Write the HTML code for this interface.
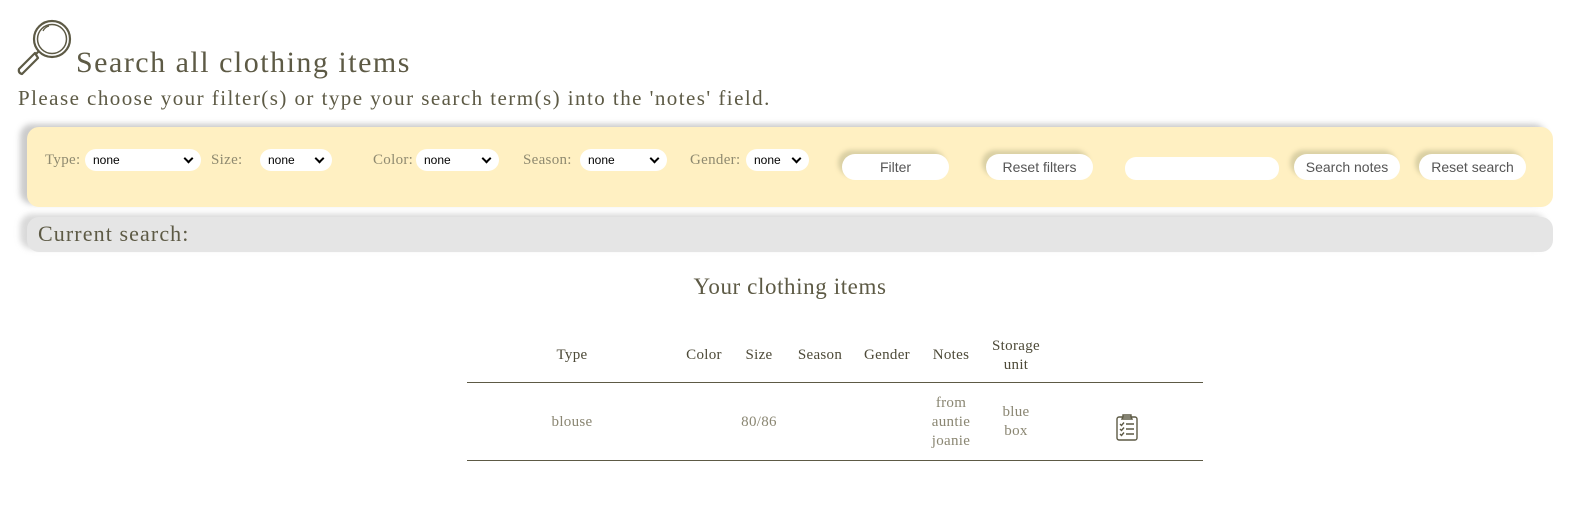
<!DOCTYPE html>
<html><head><style>
body{margin:0;width:1570px;height:511px;background:#fff;font-family:"Liberation Serif",serif;color:#5d5a45;position:relative;overflow:hidden}
.a{position:absolute;white-space:nowrap}
.lbl{font-size:15px;color:#8f8a70;top:152px;letter-spacing:.3px}
.sel{position:absolute;top:149px;height:22px;background:#fff;border-radius:11px;font-family:"Liberation Sans",sans-serif;font-size:12px;color:#000;line-height:22px;box-sizing:border-box;padding-left:8px}
.sel:after{content:"";position:absolute;right:9px;top:6px;width:5px;height:5px;border-right:2px solid #000;border-bottom:2px solid #000;transform:rotate(45deg)}
.btn{position:absolute;top:154px;height:26px;background:#fff;border-radius:13px;font-family:"Liberation Sans",sans-serif;font-size:14px;color:#555;text-align:center;line-height:26px;box-shadow:-4px -4px 4px rgba(150,150,110,.35)}
.th{font-size:15px;color:#4d4a38;text-align:center;line-height:19px;letter-spacing:.3px}
.td{font-size:15px;color:#8a8672;text-align:center;line-height:19px;letter-spacing:.3px}
</style></head><body>
<svg class="a" style="left:16px;top:18px" width="58" height="58" viewBox="0 0 58 58" fill="none" stroke="#5d5a45" stroke-width="2.2">
<circle cx="36" cy="21" r="18"/><circle cx="36" cy="21" r="14.5" stroke-width="1.5"/>
<path d="M23 33 L19 37"/><path d="M19 35 L3 51 Q2 55 6 56 L22 40 Z" stroke-linejoin="round"/>
<path d="M27 13 Q29 9 33 8" stroke-width="1.2"/>
</svg>
<div class="a" style="left:76px;top:46px;font-size:30px;letter-spacing:1.5px">Search all clothing items</div>
<div class="a" style="left:18px;top:86px;font-size:21px;letter-spacing:1.45px">Please choose your filter(s) or type your search term(s) into the 'notes' field.</div>
<div class="a" style="left:27px;top:127px;width:1526px;height:80px;background:#fff0c2;border-radius:12px;box-shadow:-7px -3px 6px rgba(140,140,140,.45)"></div>
<div class="a" style="left:27px;top:217px;width:1526px;height:35px;background:#e5e5e5;border-radius:12px;box-shadow:-7px -3px 6px rgba(160,160,160,.4)"></div>
<div class="a" style="left:38px;top:221px;font-size:22px;letter-spacing:1.1px">Current search:</div>
<div class="a lbl" style="left:45px">Type:</div><div class="sel" style="left:85px;width:116px">none</div>
<div class="a lbl" style="left:211px">Size:</div><div class="sel" style="left:260px;width:72px">none</div>
<div class="a lbl" style="left:373px">Color:</div><div class="sel" style="left:416px;width:83px">none</div>
<div class="a lbl" style="left:523px">Season:</div><div class="sel" style="left:580px;width:87px">none</div>
<div class="a lbl" style="left:690px">Gender:</div><div class="sel" style="left:746px;width:63px">none</div>
<div class="btn" style="left:842px;width:107px">Filter</div>
<div class="btn" style="left:986px;width:107px">Reset filters</div>
<div class="a" style="left:1125px;top:157px;width:154px;height:23px;background:#fff;border-radius:11px"></div>
<div class="btn" style="left:1294px;width:106px">Search notes</div>
<div class="btn" style="left:1419px;width:107px">Reset search</div>
<div class="a" style="left:590px;width:400px;top:274px;font-size:23px;text-align:center;letter-spacing:.6px">Your clothing items</div>
<div class="a th" style="left:522px;width:100px;top:346px">Type</div>
<div class="a th" style="left:674px;width:60px;top:346px">Color</div>
<div class="a th" style="left:729px;width:60px;top:346px">Size</div>
<div class="a th" style="left:785px;width:70px;top:346px">Season</div>
<div class="a th" style="left:852px;width:70px;top:346px">Gender</div>
<div class="a th" style="left:921px;width:60px;top:346px">Notes</div>
<div class="a th" style="left:981px;width:70px;top:337px">Storage<br>unit</div>
<div class="a" style="left:467px;top:382px;width:736px;height:1px;background:#5d5a45"></div>
<div class="a td" style="left:522px;width:100px;top:413px">blouse</div>
<div class="a td" style="left:729px;width:60px;top:413px">80/86</div>
<div class="a td" style="left:921px;width:60px;top:394px">from<br>auntie<br>joanie</div>
<div class="a td" style="left:981px;width:70px;top:403px">blue<br>box</div>
<svg class="a" style="left:1116px;top:413px" width="22" height="28" viewBox="0 0 22 28" fill="none" stroke="#5d5a45" stroke-width="1.4">
<rect x="1" y="4" width="20" height="23" rx="2"/><path d="M7 4 V2 H15 V4 L16 6 H6 Z"/>
<path d="M4 11l1.5 1.5 2.5-3M4 16l1.5 1.5 2.5-3M4 21l1.5 1.5 2.5-3M10 11h8M10 16h8M10 21h8"/>
</svg>
<div class="a" style="left:467px;top:460px;width:736px;height:1px;background:#5d5a45"></div>
</body></html>
